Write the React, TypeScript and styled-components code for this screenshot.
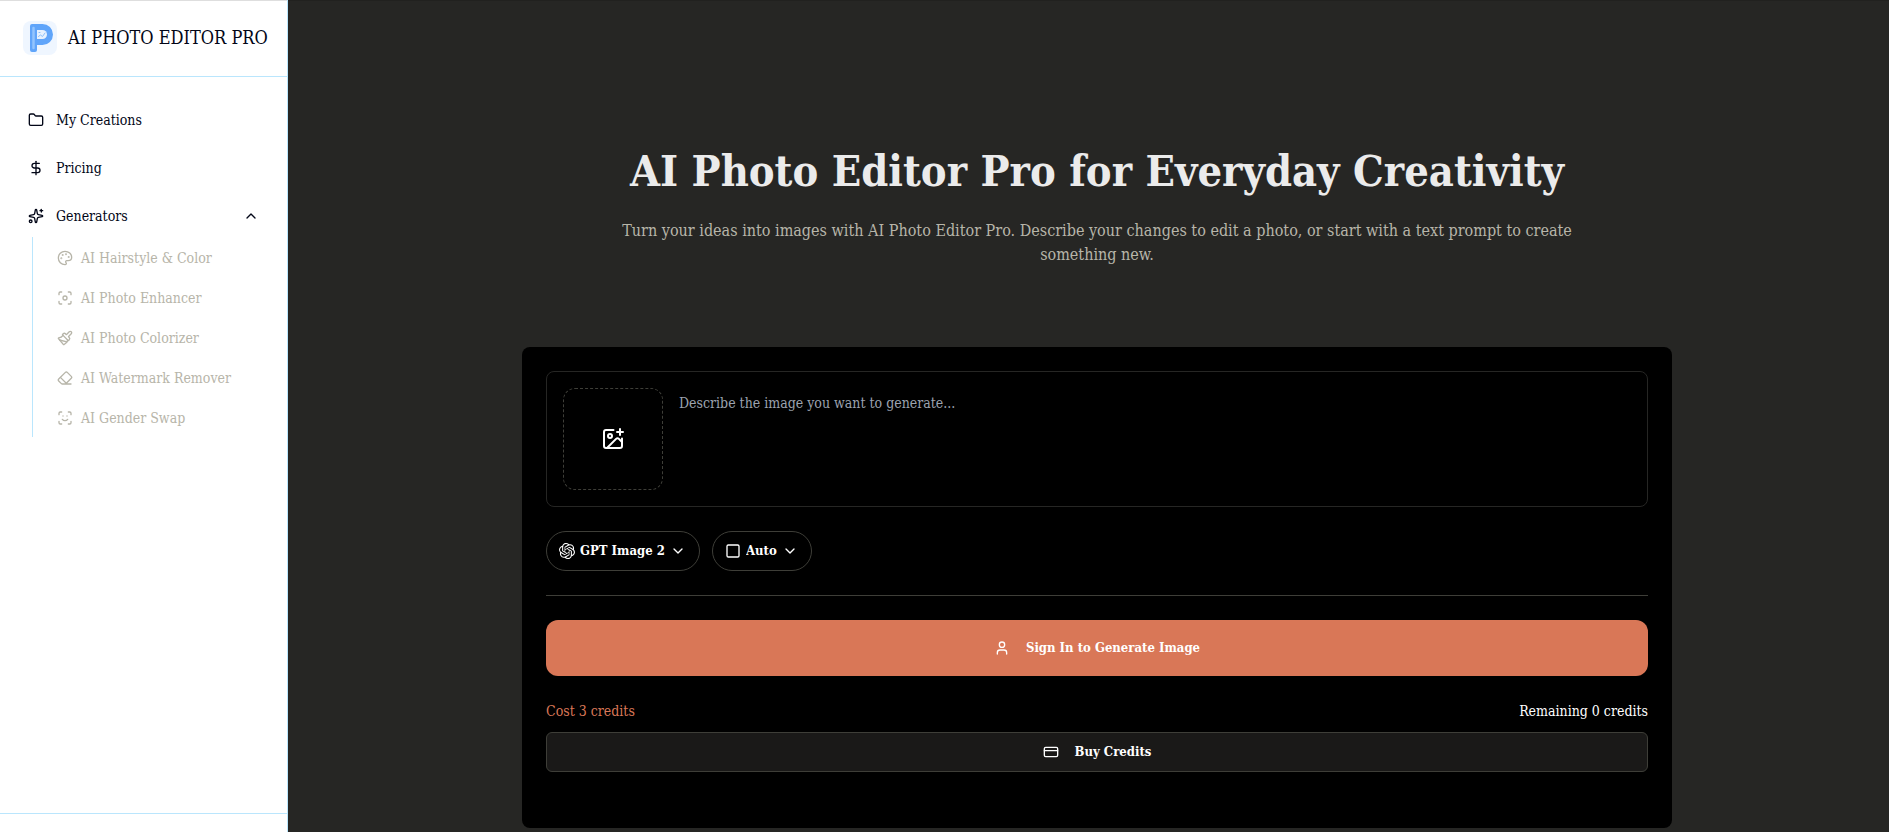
import React from "react";
import styled, { createGlobalStyle } from "styled-components";
import {
  ChevronDown,
  ChevronUp,
  CreditCard,
  DollarSign,
  Eraser,
  Focus,
  Folder,
  ImagePlus,
  Paintbrush,
  Palette,
  ScanFace,
  Sparkles,
  Square,
  User,
} from "lucide-react";
import { SiOpenai } from "react-icons/si";

const GlobalStyle = createGlobalStyle`
  *, *::before, *::after { box-sizing: border-box; }
  body {
    margin: 0;
    background: #262624;
    font-family: "DejaVu Serif Condensed", "DejaVu Serif", serif;
    font-size: 14px;
    line-height: 20px;
  }
  button, select, textarea { font: inherit; color: inherit; }
  a { color: inherit; text-decoration: none; }
`;

const Layout = styled.div`
  display: flex;
  min-height: 100vh;
`;

const Sidebar = styled.aside`
  position: sticky;
  top: 0;
  display: flex;
  flex-direction: column;
  flex: none;
  width: 288px;
  height: 100vh;
  background: #fff;
  color: #020617;
  border-right: 1px solid #bae6fd;
  box-shadow: inset 0 1px 0 #dedede;
`;

const Brand = styled.a`
  display: flex;
  align-items: center;
  gap: 11px;
  height: 77px;
  padding: 0 16px 0 23px;
  border-bottom: 1px solid #bae6fd;
  font-size: 18px;
  line-height: 28px;
  white-space: nowrap;
`;

const Nav = styled.nav`
  flex: 1;
  padding: 24px 16px;
`;

const NavList = styled.ul`
  display: grid;
  gap: 8px;
  margin: 0;
  padding: 0;
  list-style: none;
`;

const NavItem = styled.a`
  display: flex;
  align-items: center;
  gap: 12px;
  width: 100%;
  height: 40px;
  padding: 0 12px 2px;
  border: 0;
  background: none;
  font-weight: 400;
  text-align: left;
  cursor: pointer;
`;

const NavLabel = styled.span`
  flex: 1;
`;

const SubList = styled.ul`
  margin: 0 0 0 16px;
  padding: 0 0 0 12px;
  border-left: 1px solid #bae6fd;
  list-style: none;
`;

const SubItem = styled.a`
  display: flex;
  align-items: center;
  gap: 8px;
  height: 40px;
  padding: 2px 12px 0;
  color: #b7b5a9;
`;

const SidebarFooter = styled.footer`
  height: 19px;
  border-top: 1px solid #bae6fd;
`;

const Main = styled.main`
  flex: 1;
  min-width: 0;
  padding: 144px 0 4px 17px;
  box-shadow: inset 0 1px 0 #21211f;
`;

const Hero = styled.header`
  max-width: 1024px;
  margin: 0 auto 80px;
  text-align: center;
`;

const Title = styled.h1`
  margin: 0 0 21px;
  color: #ebebeb;
  font-size: 43px;
  line-height: 54px;
  font-weight: 700;
`;

const Lead = styled.p`
  max-width: 992px;
  margin: 0 auto;
  color: #b7b5a9;
  font-size: 16px;
  line-height: 24px;
`;

const Card = styled.section`
  max-width: 1150px;
  margin: 0 auto;
  padding: 24px 24px 56px;
  border-radius: 8px;
  background: #000;
  color: #fff;
`;

const PromptBox = styled.div`
  display: flex;
  gap: 16px;
  padding: 16px;
  border: 1px solid #262624;
  border-radius: 8px;
`;

const UploadButton = styled.button`
  display: grid;
  place-items: center;
  flex: none;
  width: 100px;
  height: 102px;
  padding: 0;
  border: 1px dashed #3e3e38;
  border-radius: 12px;
  background: none;
  cursor: pointer;
`;

const PromptInput = styled.textarea`
  flex: 1;
  min-width: 0;
  padding: 5px 0;
  border: 0;
  outline: 0;
  resize: none;
  background: none;
  &::placeholder { color: #9ca3af; opacity: 1; }
`;

const Options = styled.div`
  display: flex;
  gap: 12px;
  padding: 24px 0;
  border-bottom: 1px solid #3e3e38;
`;

const Pill = styled.label`
  display: flex;
  align-items: center;
  gap: 5px;
  height: 40px;
  padding: 0 13px 0 12px;
  border: 1px solid #3e3e38;
  border-radius: 20px;
  font-weight: 700;
`;

const PillSelect = styled.select`
  appearance: none;
  padding: 0;
  border: 0;
  outline: 0;
  background: none;
  font-size: 13px;
  cursor: pointer;
`;

const ActionButton = styled.button<{ $primary?: boolean }>`
  display: flex;
  align-items: center;
  justify-content: center;
  gap: 16px;
  width: 100%;
  height: ${(p) => (p.$primary ? "56px" : "40px")};
  border: ${(p) => (p.$primary ? "0" : "1px solid #3e3e38")};
  border-radius: ${(p) => (p.$primary ? "12px" : "6px")};
  background: ${(p) => (p.$primary ? "#d97757" : "#1a1918")};
  font-size: 13px;
  font-weight: 700;
  cursor: pointer;
`;

const Checkout = styled.div`
  padding-top: 24px;
`;

const CreditRow = styled.div`
  display: flex;
  justify-content: space-between;
  padding: 25px 0 11px;
`;

const Cost = styled.span`
  color: #d97757;
`;

const tools = [
  { label: "AI Hairstyle & Color", Icon: Palette },
  { label: "AI Photo Enhancer", Icon: Focus },
  { label: "AI Photo Colorizer", Icon: Paintbrush },
  { label: "AI Watermark Remover", Icon: Eraser },
  { label: "AI Gender Swap", Icon: ScanFace },
];

function Logo() {
  return (
    <svg width="34" height="34" viewBox="0 0 34 34" aria-hidden="true">
      <rect width="34" height="34" rx="8" fill="#eff6ff" />
      <path
        fill="#60a5fa"
        d="M9 3h10.500a10.500 10.500 0 0 1 0 21H14v5a2 2 0 0 1-2 2H9a2 2 0 0 1-2-2V5a2 2 0 0 1 2-2z"
      />
      <path d="M10.500 7v20" stroke="#93c5fd" strokeWidth="2.500" strokeLinecap="round" />
      <path d="M14 9h5.500a4.500 4.500 0 0 1 0 9H14z" fill="#e6f1fe" />
      <path
        d="M15.500 15.500l2-1.500 2 1.500 2.500-3.500M16 11.500h1"
        fill="none"
        stroke="#8cc0fb"
        strokeLinecap="round"
      />
    </svg>
  );
}

export default function App() {
  return (
    <>
      <GlobalStyle />
      <Layout>
        <Sidebar>
          <Brand href="#">
            <Logo />
            AI PHOTO EDITOR PRO
          </Brand>
          <Nav aria-label="Main">
            <NavList>
              <li>
                <NavItem href="#creations">
                  <Folder size={16} />
                  <NavLabel>My Creations</NavLabel>
                </NavItem>
              </li>
              <li>
                <NavItem href="#pricing">
                  <DollarSign size={16} />
                  <NavLabel>Pricing</NavLabel>
                </NavItem>
              </li>
              <li>
                <NavItem as="button" type="button" aria-expanded="true">
                  <Sparkles size={16} />
                  <NavLabel>Generators</NavLabel>
                  <ChevronUp size={16} />
                </NavItem>
                <SubList>
                  {tools.map(({ label, Icon }) => (
                    <li key={label}>
                      <SubItem href="#tools">
                        <Icon size={16} />
                        {label}
                      </SubItem>
                    </li>
                  ))}
                </SubList>
              </li>
            </NavList>
          </Nav>
          <SidebarFooter />
        </Sidebar>
        <Main>
          <Hero>
            <Title>AI Photo Editor Pro for Everyday Creativity</Title>
            <Lead>
              Turn your ideas into images with AI Photo Editor Pro. Describe your changes to edit a
              photo, or start with a text prompt to create something new.
            </Lead>
          </Hero>
          <Card>
            <PromptBox>
              <UploadButton type="button" aria-label="Add image">
                <ImagePlus size={24} />
              </UploadButton>
              <PromptInput
                aria-label="Prompt"
                placeholder="Describe the image you want to generate..."
              />
            </PromptBox>
            <Options>
              <Pill>
                <SiOpenai size={16} />
                <PillSelect aria-label="Model">
                  <option>GPT Image 2</option>
                </PillSelect>
                <ChevronDown size={16} />
              </Pill>
              <Pill>
                <Square size={16} />
                <PillSelect aria-label="Aspect ratio">
                  <option>Auto</option>
                </PillSelect>
                <ChevronDown size={16} />
              </Pill>
            </Options>
            <Checkout>
              <ActionButton type="button" $primary>
                <User size={16} />
                Sign In to Generate Image
              </ActionButton>
              <CreditRow>
                <Cost>Cost 3 credits</Cost>
                <span>Remaining 0 credits</span>
              </CreditRow>
              <ActionButton type="button">
                <CreditCard size={16} />
                Buy Credits
              </ActionButton>
            </Checkout>
          </Card>
        </Main>
      </Layout>
    </>
  );
}
